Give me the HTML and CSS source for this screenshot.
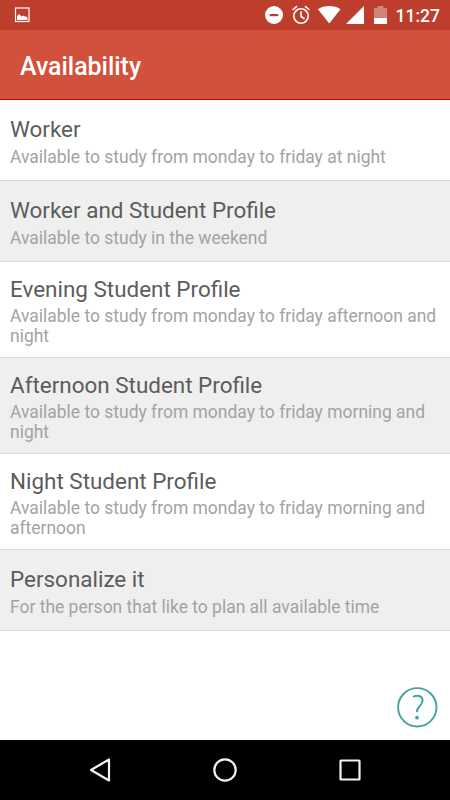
FILE: index.html
```html
<!DOCTYPE html>
<html lang="en">
<head>
  <meta charset="UTF-8" />
  <meta name="viewport" content="width=device-width, initial-scale=1.0" />
  <title>Availability</title>
  <link rel="stylesheet" href="styles.css">
</head>
<body>
  <div class="screen">
    <!-- status bar -->
    <div class="status-bar">
      <svg class="picture-icon" width="16" height="16" viewBox="0 0 16 16">
        <rect x="1.5" y="1" width="13.5" height="13.5" fill="none" stroke="#fff" stroke-width="1.2" />
        <path d="M3 13V9.2L5 7L7.6 9.5L9.5 8.5L11 9.7L12.2 9.2L13.5 11V13Z" fill="#fff" />
      </svg>
      <svg class="status-icons" width="124" height="20" viewBox="0 0 124 20" fill="#fff">
        <circle cx="9" cy="10" r="9" />
        <path d="M4.7 9H13.3V11.2H4.7Z" fill="#bd3e2d" />
        <g fill="none" stroke="#fff" stroke-width="1.6" stroke-linecap="round">
          <circle cx="36" cy="11" r="7.2" />
          <path d="M36 7V11.5L39 13.5M28 4.5L31.5 1.7M44 4.5L40.5 1.7" />
        </g>
        <path d="M53 4.2C59 0 69.5 0 75.5 4.2L64.25 18.6Z" />
        <path d="M99 1V19H81Z" />
        <path d="M109 3H112.5V1H118.5V3H122V13H109Z" fill="#d38478" />
        <path d="M109 13H122V19H109Z" />
      </svg>
      <span class="clock">11:27</span>
    </div>

    <header class="app-bar">
      <h1>Availability</h1>
    </header>

    <!-- profiles -->
    <ul class="profile-list">
      <li class="profile">
        <h2>Worker</h2>
        <p>Available to study from monday to friday at night</p>
      </li>
      <li class="profile">
        <h2>Worker and Student Profile</h2>
        <p>Available to study in the weekend</p>
      </li>
      <li class="profile tall">
        <h2>Evening Student Profile</h2>
        <p>Available to study from monday to friday afternoon and night</p>
      </li>
      <li class="profile tall">
        <h2>Afternoon Student Profile</h2>
        <p>Available to study from monday to friday morning and night</p>
      </li>
      <li class="profile tall">
        <h2>Night Student Profile</h2>
        <p>Available to study from monday to friday morning and afternoon</p>
      </li>
      <li class="profile">
        <h2>Personalize it</h2>
        <p>For the person that like to plan all available time</p>
      </li>
    </ul>

    <div class="help-area">
      <svg class="help-icon" width="42" height="42" viewBox="0 0 42 42">
        <circle cx="21.3" cy="21.3" r="19.2" fill="none" stroke="#46a2a4" stroke-width="1.9" />
        <path d="M17 10.8C20.8 9 26.6 9.2 26.6 14.5C26.6 19.7 20.8 20 20.8 26.3" fill="none" stroke="#46a2a4" stroke-width="2" />
        <circle cx="21" cy="31.7" r="1.9" fill="#46a2a4" />
      </svg>
    </div>

    <!-- navigation bar -->
    <nav class="nav-bar">
      <svg width="26" height="26" viewBox="0 0 26 26">
        <path d="M22 2.5V23.5L4 13Z" />
      </svg>
      <svg width="26" height="26" viewBox="0 0 26 26">
        <circle cx="13" cy="13" r="10.7" />
      </svg>
      <svg width="26" height="26" viewBox="0 0 26 26">
        <rect x="3.5" y="3.5" width="19" height="19" rx="0.5" />
      </svg>
    </nav>
  </div>
</body>
</html>
```

FILE: styles.css
```css
* {
  box-sizing: border-box;
}
body {
  margin: 0;
  font-family: Roboto, sans-serif;
  background: #fff;
}
.screen {
  display: flex;
  flex-direction: column;
  width: 450px;
  height: 800px;
}
svg {
  display: block;
  flex: none;
}
.status-bar {
  display: flex;
  align-items: center;
  height: 30px;
  padding: 0 10px 0 14px;
  background: #bd3e2d;
  color: #fff;
}
.status-icons {
  margin-left: auto;
}
.clock {
  width: 51px;
  padding-top: 1px;
  text-align: right;
  font-size: 17.5px;
  font-weight: 500;
}
.app-bar {
  display: flex;
  align-items: center;
  height: 70px;
  padding: 4px 20px 0;
  background: #d1513d;
  border-bottom: 1px solid #c00;
  color: #fff;
}
.app-bar h1 {
  margin: 0;
  font-size: 24.9px;
  font-weight: 500;
}
.profile-list {
  margin: 0;
  padding: 0;
  list-style: none;
}
.profile {
  height: 81px;
  padding: 16px 10px 0;
  border-bottom: 1px solid #d9d9d9;
}
.profile:nth-child(even) {
  background: #efefef;
}
.profile.tall {
  height: 96px;
  padding-top: 14px;
}
.profile h2 {
  margin: 0;
  font-size: 22.45px;
  font-weight: 400;
  line-height: 27px;
  color: #5c5c5c;
}
.profile p {
  margin: 4px 0 0;
  font-size: 17.48px;
  line-height: 20px;
  color: #a3a3a3;
}
.profile.tall p {
  margin-top: 3px;
}
.help-area {
  display: flex;
  flex: 1;
  justify-content: flex-end;
  align-items: flex-end;
  padding: 0 12px 12px;
}
.nav-bar {
  display: flex;
  justify-content: center;
  align-items: center;
  gap: 99px;
  height: 60px;
  background: #000;
}
.nav-bar svg {
  fill: none;
  stroke: #f2f2f2;
  stroke-width: 2.2;
  stroke-linejoin: round;
}
```
